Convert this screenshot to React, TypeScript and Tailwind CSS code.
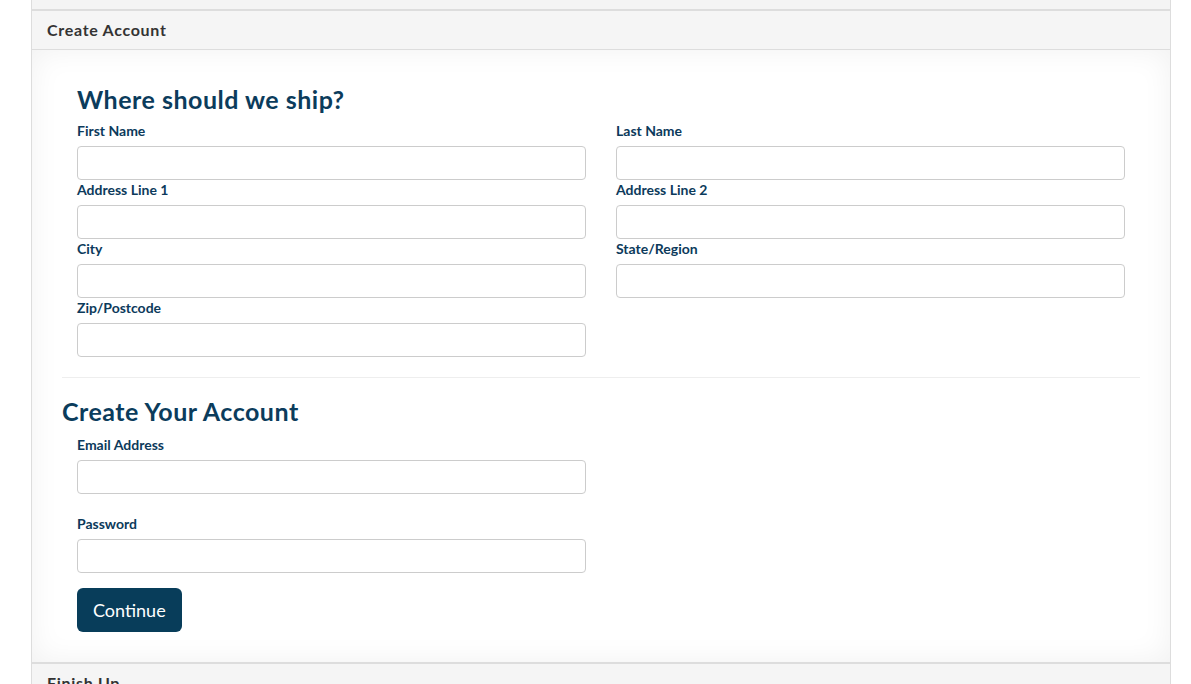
import React from 'react';

const Field: React.FC<{ label: string; className?: string }> = ({ label, className = '' }) => (
  <div className={className}>
    <label className="block h-5 mb-[5px] text-[14px] leading-5 font-bold text-[#0c3a5b]">{label}</label>
    <input
      type="text"
      className="block w-full h-[34px] rounded-[4px] border border-[#ccc] bg-white px-3 text-sm focus:outline-none"
    />
  </div>
);

const App: React.FC = () => {
  return (
    <div className="min-h-screen bg-white font-['Lato','Liberation_Sans',sans-serif]">
      <div className="ml-[31px] w-[1140px] border-x border-[#ddd]">
        {/* previous step */}
        <div className="h-[10px] bg-[#f4f4f4] border-b border-[#ddd]" />

        {/* Create Account header */}
        <div className="border-y border-[#ddd] bg-[#f5f5f5] px-[15px] py-[9px]">
          <h2 className="text-[16px] leading-5 font-bold text-[#333] tracking-[0.7px]">Create Account</h2>
        </div>

        {/* body */}
        <div className="border-b border-[#ddd] bg-white px-[30px] pt-[36px] pb-[30px] shadow-[inset_0_0_30px_rgba(0,0,0,0.06)]">
          <div className="px-[15px]">
            <h3 className="mb-[9px] text-[25px] leading-[26px] font-bold text-[#0b3c5c] tracking-[0.5px]">Where should we ship?</h3>
            <div className="grid grid-cols-2 gap-x-[30px]">
              <Field label="First Name" />
              <Field label="Last Name" />
              <Field label="Address Line 1" />
              <Field label="Address Line 2" />
              <Field label="City" />
              <Field label="State/Region" />
              <Field label="Zip/Postcode" />
            </div>
          </div>

          <hr className="mt-5 border-t border-[#eee]" />

          <h3 className="mt-5 mb-[11px] text-[25px] leading-[26px] font-bold text-[#0b3c5c] tracking-[0.5px]">Create Your Account</h3>
          <div className="grid grid-cols-2 gap-x-[30px] px-[15px]">
            <div>
              <Field label="Email Address" className="mb-5" />
              <Field label="Password" className="mb-[15px]" />
              <button className="h-[44px] rounded-[6px] bg-[#083d5a] px-4 text-[18px] text-white">Continue</button>
            </div>
          </div>
        </div>

        {/* next step */}
        <div className="border-t border-[#ddd] bg-[#f5f5f5] px-[15px] py-[9px]">
          <h2 className="text-[16px] leading-5 font-bold text-[#333] tracking-[0.7px]">Finish Up</h2>
        </div>
      </div>
    </div>
  );
};

export default App;
